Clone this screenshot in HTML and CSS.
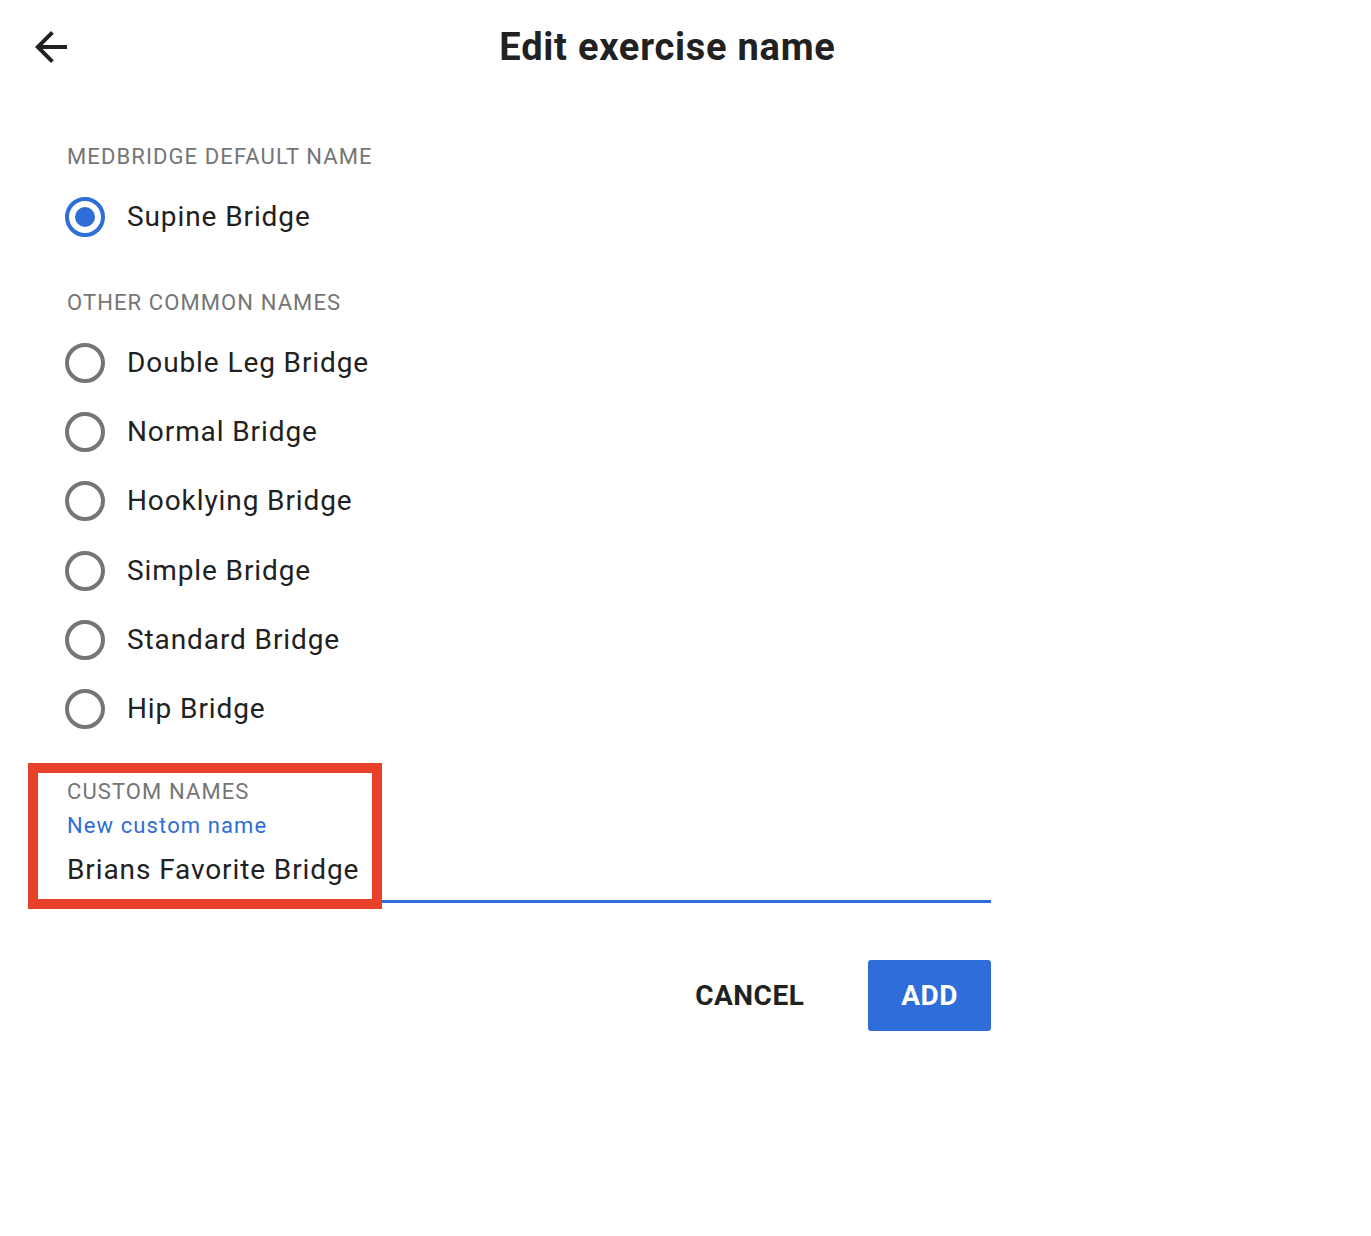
FILE: index.html
```html
<!DOCTYPE html>
<html lang="en">
<head>
<meta charset="utf-8">
<title>Edit exercise name</title>
<link rel="stylesheet" href="styles.css">
</head>
<body>
<div class="page">
  <header class="header">
    <button class="back" aria-label="Back">
      <svg viewBox="0 0 24 24" width="48" height="48"><path d="M20 11H7.83l5.59-5.59L12 4l-8 8 8 8 1.41-1.41L7.83 13H20v-2z" fill="#212121"/></svg>
    </button>
    <h1 class="title">Edit exercise name</h1>
  </header>

  <main class="content">
    <div class="section-label first">MEDBRIDGE DEFAULT NAME</div>
    <div class="options">
      <label class="option">
        <svg class="radio checked" viewBox="0 0 24 24" width="48" height="48"><circle cx="12" cy="12" r="9" fill="none" stroke="currentColor" stroke-width="2"/><circle cx="12" cy="12" r="5" fill="currentColor"/></svg>
        <span class="option-text">Supine Bridge</span>
      </label>
    </div>

    <div class="section-label">OTHER COMMON NAMES</div>
    <div class="options">
      <label class="option">
        <svg class="radio" viewBox="0 0 24 24" width="48" height="48"><circle cx="12" cy="12" r="9" fill="none" stroke="currentColor" stroke-width="2"/></svg>
        <span class="option-text">Double Leg Bridge</span>
      </label>
      <label class="option">
        <svg class="radio" viewBox="0 0 24 24" width="48" height="48"><circle cx="12" cy="12" r="9" fill="none" stroke="currentColor" stroke-width="2"/></svg>
        <span class="option-text">Normal Bridge</span>
      </label>
      <label class="option">
        <svg class="radio" viewBox="0 0 24 24" width="48" height="48"><circle cx="12" cy="12" r="9" fill="none" stroke="currentColor" stroke-width="2"/></svg>
        <span class="option-text">Hooklying Bridge</span>
      </label>
      <label class="option">
        <svg class="radio" viewBox="0 0 24 24" width="48" height="48"><circle cx="12" cy="12" r="9" fill="none" stroke="currentColor" stroke-width="2"/></svg>
        <span class="option-text">Simple Bridge</span>
      </label>
      <label class="option">
        <svg class="radio" viewBox="0 0 24 24" width="48" height="48"><circle cx="12" cy="12" r="9" fill="none" stroke="currentColor" stroke-width="2"/></svg>
        <span class="option-text">Standard Bridge</span>
      </label>
      <label class="option">
        <svg class="radio" viewBox="0 0 24 24" width="48" height="48"><circle cx="12" cy="12" r="9" fill="none" stroke="currentColor" stroke-width="2"/></svg>
        <span class="option-text">Hip Bridge</span>
      </label>
    </div>

    <div class="custom">
      <div class="section-label tight">CUSTOM NAMES</div>
      <div class="field">
        <div class="field-label">New custom name</div>
        <div class="field-input">Brians Favorite Bridge</div>
      </div>
      <div class="highlight"></div>
    </div>

    <div class="actions">
      <button class="btn btn-text">CANCEL</button>
      <button class="btn btn-primary">ADD</button>
    </div>
  </main>
</div>
</body>
</html>
```

FILE: styles.css
```css
* { box-sizing: border-box; }

body {
  margin: 0;
  background: #ffffff;
  font-family: Roboto, "Liberation Sans", Arial, sans-serif;
  color: #212121;
}

.page {
  width: 1371px;
  min-height: 1236px;
}

.header {
  display: flex;
  align-items: center;
  height: 48px;
  margin-top: 23px;
  padding-left: 27px;
  padding-right: 36px;
  position: relative;
}

.back {
  width: 48px;
  height: 48px;
  padding: 0;
  border: 0;
  background: none;
  display: flex;
  cursor: pointer;
}

.title {
  flex: 1;
  margin: 0;
  margin-left: -75px;
  text-align: center;
  font-size: 38px;
  font-weight: 700;
  letter-spacing: 0.75px;
  line-height: 48px;
  color: #212121;
}

.content {
  width: 991px;
  padding-left: 67px;
}

.section-label {
  font-size: 22px;
  line-height: 30px;
  letter-spacing: 1.1px;
  color: #757575;
  margin-top: 47px;
}

.section-label.first { margin-top: 71px; }
.section-label.tight { margin-top: 0; }

.options {
  display: flex;
  flex-direction: column;
  gap: 21.2px;
  margin-top: 21px;
}

.option {
  display: flex;
  align-items: center;
  gap: 18px;
  height: 48px;
  margin-left: -6px;
  cursor: pointer;
}

.radio {
  color: #757575;
  flex: none;
}

.radio.checked { color: #2f6dd8; }

.option-text {
  font-size: 28px;
  line-height: 36px;
  letter-spacing: 0.9px;
  color: #212121;
}

.custom {
  position: relative;
  margin-top: 44px;
}

.field {
  margin-top: 4px;
  border-bottom: 3px solid #2f6dd8;
  padding-bottom: 12px;
}

.field-label {
  font-size: 22px;
  line-height: 30px;
  letter-spacing: 1.1px;
  color: #2f6dd8;
}

.field-input {
  margin-top: 11px;
  font-size: 28px;
  line-height: 36px;
  letter-spacing: 0.9px;
  color: #212121;
}

.highlight {
  position: absolute;
  left: -39px;
  top: -14px;
  width: 354px;
  height: 146px;
  border: 10px solid #e8412a;
  pointer-events: none;
}

.actions {
  display: flex;
  justify-content: flex-end;
  gap: 31px;
  margin-top: 57px;
}

.btn {
  height: 71px;
  padding: 0 33px;
  border: 0;
  border-radius: 3px;
  font-family: Roboto, "Liberation Sans", Arial, sans-serif;
  font-size: 28px;
  font-weight: 700;
  letter-spacing: 0.5px;
  cursor: pointer;
}

.btn-text {
  background: none;
  color: #212121;
}

.btn-primary {
  background: #2f6dd8;
  color: #ffffff;
}
```
